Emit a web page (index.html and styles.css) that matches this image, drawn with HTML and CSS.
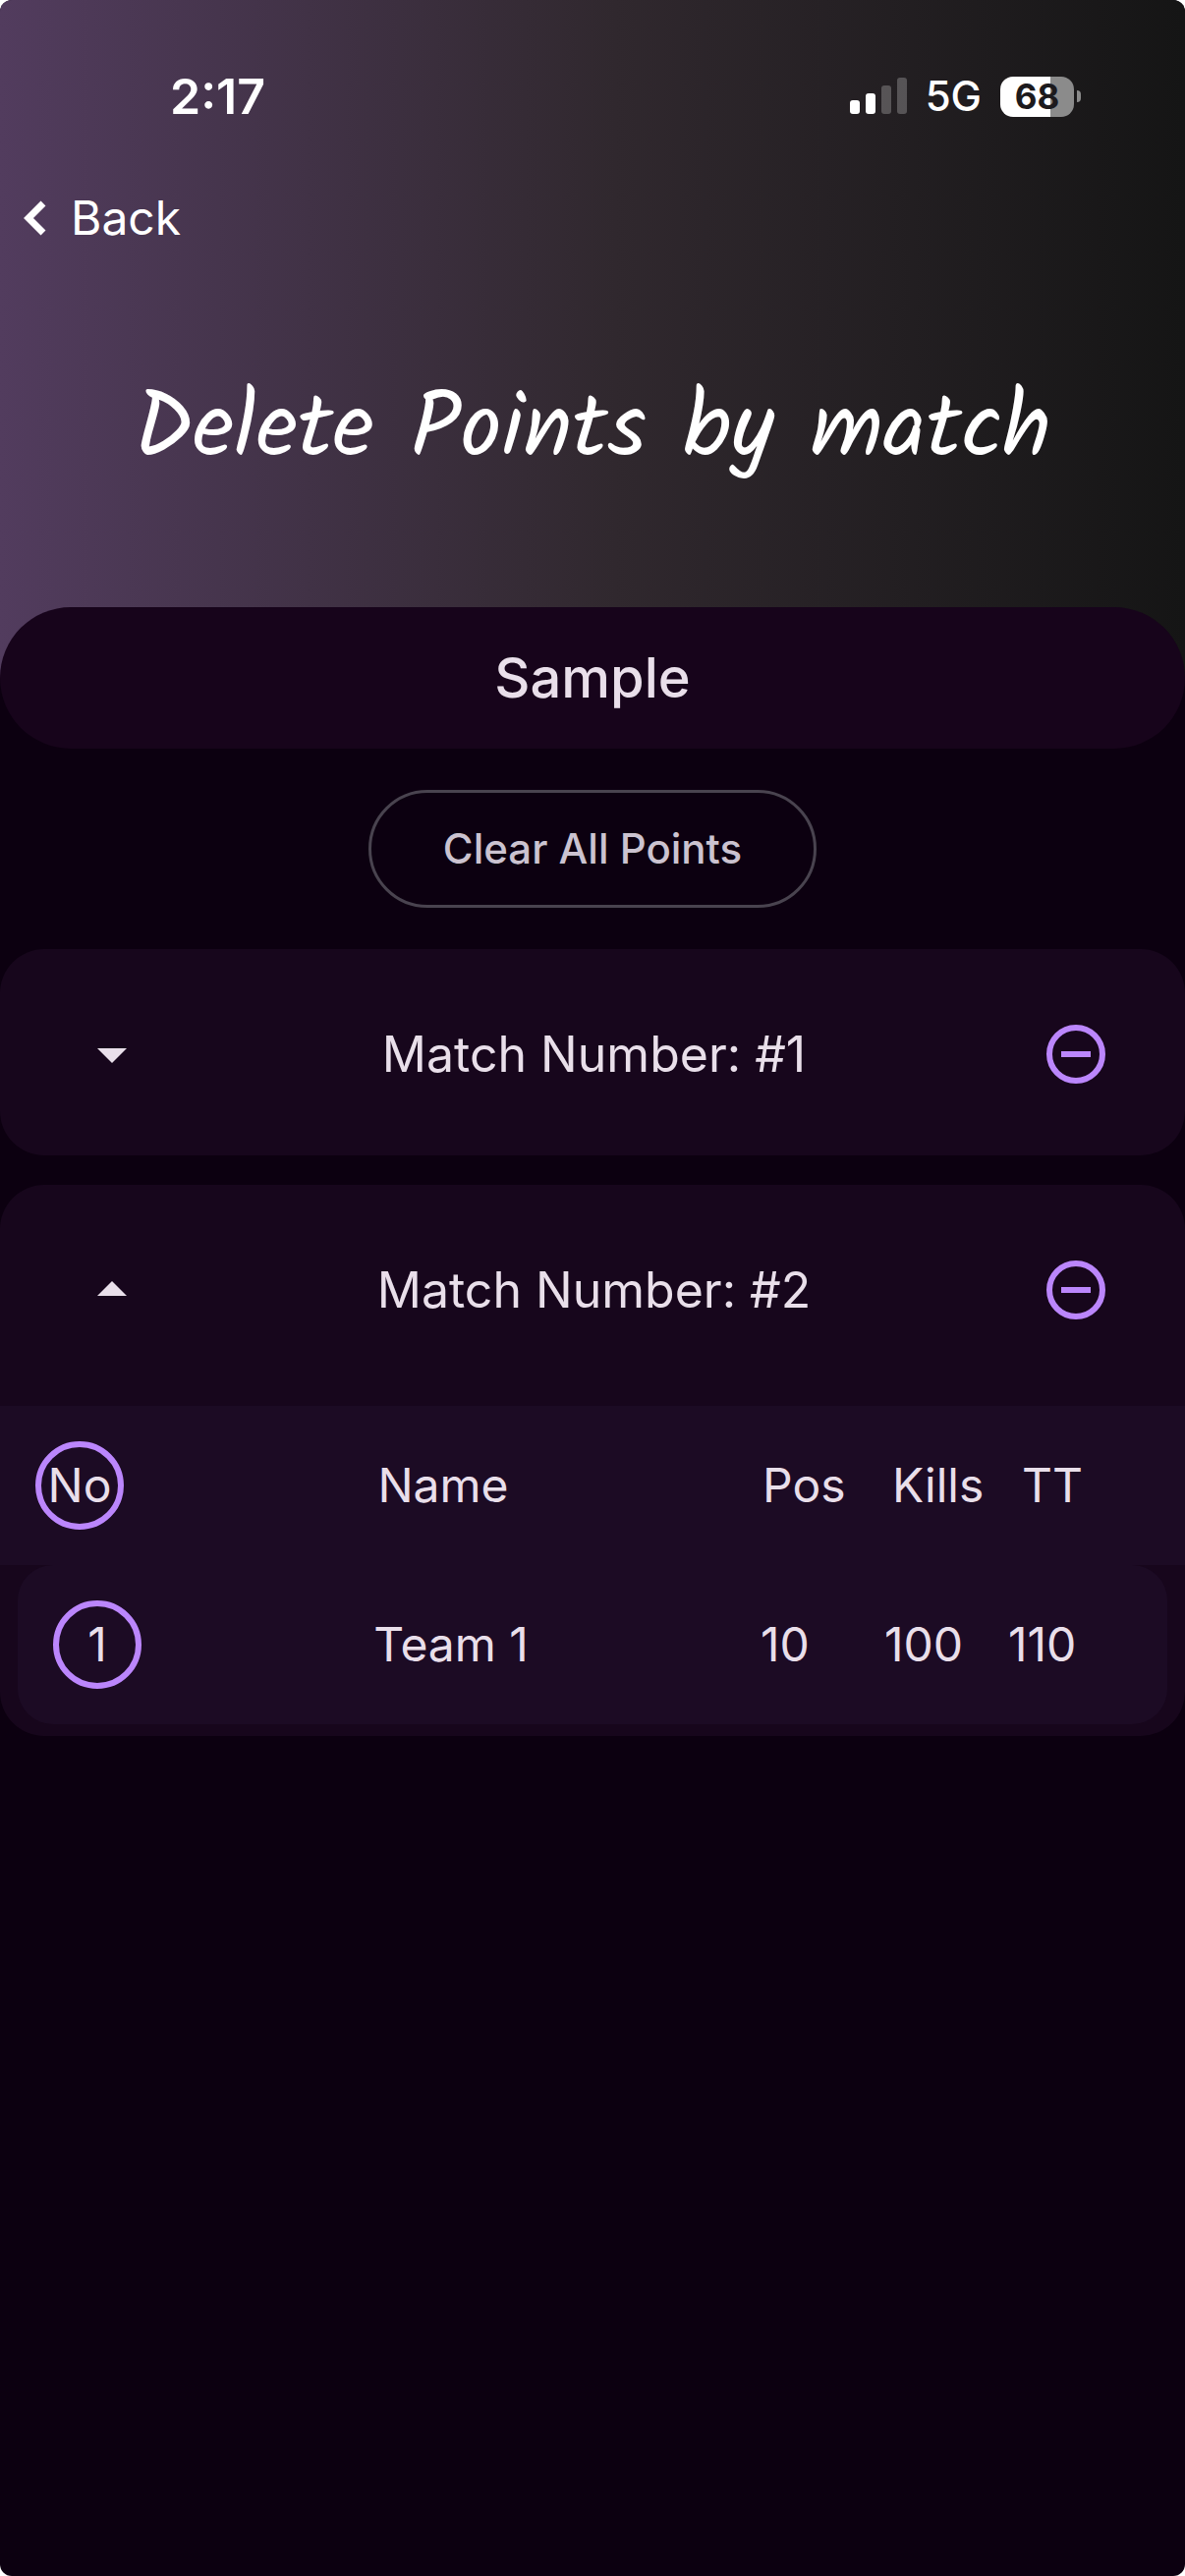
FILE: index.html
```html
<!DOCTYPE html>
<html lang="en">
<head>
<meta charset="utf-8">
<meta name="viewport" content="width=device-width, initial-scale=1">
<title>Delete Points by match</title>
<link rel="stylesheet" href="styles.css">
</head>
<body>
<div class="screen">
  <header class="hero">
    <div class="status">
      <time class="clock">2:17</time>
      <div class="indicators">
        <svg class="signal" viewBox="0 0 58 38" aria-hidden="true">
          <rect x="0" y="23" width="10" height="14" rx="3" fill="#fff"/>
          <rect x="16" y="16" width="10" height="21" rx="3" fill="#fff"/>
          <rect x="32" y="8" width="10" height="29" rx="3" fill="#fff" opacity=".24"/>
          <rect x="48" y="0" width="10" height="37" rx="3" fill="#fff" opacity=".24"/>
        </svg>
        <span class="network">5G</span>
        <div class="battery"><span class="level">68</span><span class="nub"></span></div>
      </div>
    </div>
    <a class="back" href="#">
      <svg class="chevron" viewBox="0 0 24 36" aria-hidden="true"><path d="M20 3 5 18l15 15" fill="none" stroke="#fff" stroke-width="7"/></svg>
      <span>Back</span>
    </a>
    <h1 class="title">Delete Points by match</h1>
  </header>
  <main class="content">
    <h2 class="event">Sample</h2>
    <button class="clear" type="button">Clear All Points</button>
    <section class="match">
      <div class="match-head">
        <button class="icon" type="button" aria-label="Expand match 1"><svg viewBox="0 0 24 24"><path d="M7 10l5 5 5-5z" fill="#e9dfea"/></svg></button>
        <h3 class="match-name">Match Number: #1</h3>
        <button class="icon" type="button" aria-label="Remove match 1"><svg viewBox="0 0 24 24" fill="none" stroke="#bb86fc" stroke-width="2"><circle cx="12" cy="12" r="9"/><path d="M7 12h10"/></svg></button>
      </div>
    </section>
    <section class="match">
      <div class="match-head">
        <button class="icon" type="button" aria-label="Collapse match 2"><svg viewBox="0 0 24 24"><path d="M7 14l5-5 5 5z" fill="#e9dfea"/></svg></button>
        <h3 class="match-name">Match Number: #2</h3>
        <button class="icon" type="button" aria-label="Remove match 2"><svg viewBox="0 0 24 24" fill="none" stroke="#bb86fc" stroke-width="2"><circle cx="12" cy="12" r="9"/><path d="M7 12h10"/></svg></button>
      </div>
      <table class="scores">
        <thead>
          <tr class="row row-head"><th class="badge">No</th><th class="name">Name</th><th>Pos</th><th>Kills</th><th>TT</th></tr>
        </thead>
        <tbody>
          <tr class="row row-team"><td class="badge">1</td><td class="name">Team 1</td><td>10</td><td>100</td><td>110</td></tr>
        </tbody>
      </table>
    </section>
  </main>
</div>
</body>
</html>
```
FILE: styles.css
```css
* { box-sizing: border-box; }

body {
  margin: 0;
  background: #fff;
  color: #e9dfea;
  font: 400 48px/72px Inter, "Liberation Sans", sans-serif;
}

h1, h2, h3 { margin: 0; font-weight: 400; }

button {
  padding: 0;
  border: 0;
  background: none;
  color: inherit;
  font: inherit;
  cursor: pointer;
}

.screen {
  min-height: 100vh;
  overflow: hidden;
  border-radius: 12px;
  background: #0c0010;
}

.hero {
  padding: 62px 0 183px;
  background: linear-gradient(90deg, #523c5e 0%, #30282e 52%, #151515 100%);
  color: #fff;
}

.status {
  display: flex;
  align-items: center;
  justify-content: space-between;
  padding: 0 106px 0 173px;
}

.clock { font-size: 50px; font-weight: 600; }

.indicators { display: flex; align-items: center; }

.signal { width: 58px; height: 38px; }

.network {
  margin: 0 19px;
  font-size: 42px;
  font-weight: 500;
}

.battery { display: flex; align-items: center; gap: 3px; }

.level {
  width: 75px;
  border-radius: 13px;
  background: linear-gradient(90deg, #fff 68%, #8b8b8b 68%);
  color: #1c1a1d;
  font-size: 35px;
  font-weight: 700;
  line-height: 41px;
  text-align: center;
}

.nub {
  width: 4px;
  height: 12px;
  border-radius: 0 4px 4px 0;
  background: #8b8b8b;
}

.back {
  display: flex;
  align-items: center;
  gap: 24px;
  width: max-content;
  margin-top: 52px;
  padding-left: 24px;
  color: #fff;
  text-decoration: none;
}

.chevron { width: 24px; height: 36px; }

.title {
  margin-top: 113px;
  font: 400 93px/136px Kalam, Lato, sans-serif;
  text-align: center;
}

.content { display: flex; flex-direction: column; }

.event {
  margin-top: -72px;
  padding: 36px 0;
  border-radius: 72px;
  background: #17041b;
  font-size: 56px;
  font-weight: 500;
  text-align: center;
}

.clear {
  align-self: center;
  margin: 42px 0;
  padding: 21px 73px;
  border: 3px solid #49434f;
  border-radius: 60px;
  color: #cbc3d0;
  font-size: 42px;
  font-weight: 500;
}

.match {
  overflow: hidden;
  border-radius: 45px;
  background: #17061c;
}

.match + .match { margin-top: 30px; padding-bottom: 12px; }

.match-head {
  display: flex;
  align-items: center;
  justify-content: space-between;
  padding: 71px 75px 67px 78px;
}

.match-name { font-size: 50px; }

.icon, .icon svg { display: block; width: 72px; height: 72px; }

.scores { display: block; margin-top: 15px; }

.scores thead, .scores tbody { display: block; }

.row {
  display: grid;
  align-items: center;
  padding: 36px;
  background: #1c0b24;
}

.row-head { grid-template-columns: 90px 1fr 132px 132px 130px; }

.row-team {
  grid-template-columns: 90px 1fr 126px 126px 126px;
  margin: 0 18px;
  border-radius: 36px;
}

th, td { padding: 0; font-weight: 400; text-align: left; }

.row .name { text-align: center; }

.row .badge {
  border: 6px solid #bb86fc;
  border-radius: 50%;
  line-height: 78px;
  text-align: center;
}
```
